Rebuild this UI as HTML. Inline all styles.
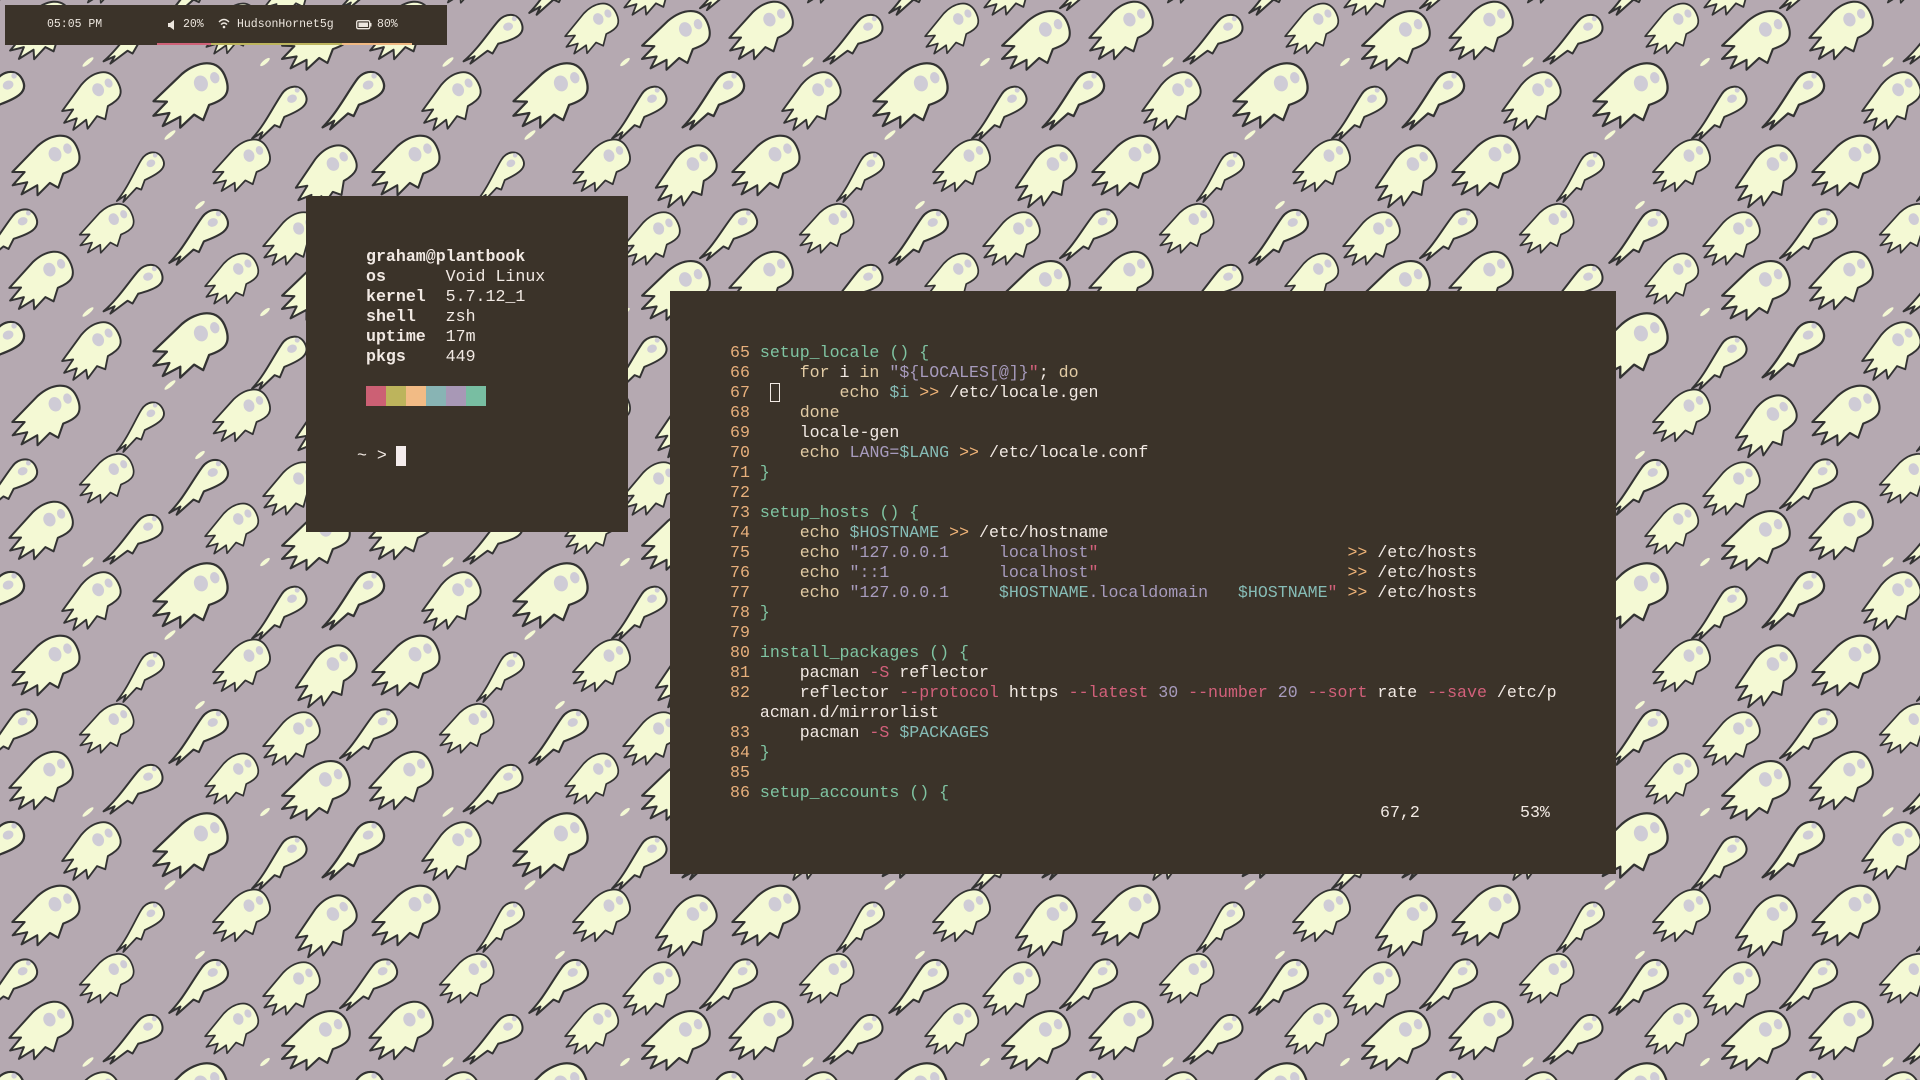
<!DOCTYPE html>
<html><head><meta charset="utf-8"><style>
html,body{margin:0;padding:0;width:1920px;height:1080px;overflow:hidden;background:#b5a9b1;font-family:"Liberation Mono",monospace;}
.bg{position:absolute;left:0;top:0;}
.bar{position:absolute;left:5px;top:5px;width:442px;height:40px;background:#3b3329;color:#ece6de;font-size:11.5px;}
.bar span{position:absolute;top:12px;line-height:16px;white-space:pre;}
.ul{position:absolute;top:38px;height:2px;}
.term{position:absolute;background:#3b3329;}
.ln{position:absolute;white-space:pre;font-size:16.6px;line-height:20px;color:#f2eae4;}
.b{font-weight:bold}
.g{color:#7fc4a2}.n{color:#e8b07c}.k{color:#e2cba4}.s{color:#a79bbd}.v{color:#86bcb6}.o{color:#f0b478}.r{color:#d2607a}.w{color:#f2eae4}
</style></head><body>
<svg class="bg" width="1920" height="1080">
<defs>
<g id="gh">
<path d="M30,-5 C30,-26 10,-27 -5,-21 L-36,-6 L-25,-2 L-40,6 L-26,8 L-35,17 L-18,14 L-21,23 L-6,16 L0,23 L9,12 C24,12 30,8 30,-5 Z" fill="#f4f9d4" stroke="#333" stroke-width="2" stroke-linejoin="round"/>
<ellipse cx="8" cy="-8" rx="6" ry="7" fill="#cfccd6"/>
<ellipse cx="21" cy="-9" rx="4" ry="5" fill="#cfccd6"/>
</g>
<g id="gh2">
<path d="M24,-4 C24,-18 10,-20 2,-14 C-10,-6 -25,8 -42,16 L-30,14 L-36,20 L-16,12 L-12,16 L-4,8 C14,8 24,6 24,-4 Z" fill="#f4f9d4" stroke="#333" stroke-width="2" stroke-linejoin="round"/>
<ellipse cx="10" cy="-6" rx="5" ry="4" fill="#cfccd6"/>
<circle cx="18" cy="-12" r="2.5" fill="#cfccd6"/>
</g>
<g id="tile">
<use href="#gh" transform="translate(45,30) rotate(-22)"/>
<use href="#gh2" transform="translate(140,35) rotate(-15)"/>
<use href="#gh" transform="translate(235,28) rotate(-25) scale(0.85)"/>
<use href="#gh" transform="translate(320,40) rotate(-18) scale(1.05)"/>
<use href="#gh2" transform="translate(0,95) rotate(-20) scale(1.1)"/>
<use href="#gh2" transform="translate(360,95) rotate(-20) scale(1.1)"/>
<use href="#gh" transform="translate(95,100) rotate(-28) scale(0.95)"/>
<use href="#gh" transform="translate(195,95) rotate(-18) scale(1.15)"/>
<use href="#gh2" transform="translate(285,108) rotate(-22)"/>
<use href="#gh" transform="translate(50,165) rotate(-20) scale(1.05)"/>
<use href="#gh2" transform="translate(145,172) rotate(-25) scale(0.9)"/>
<use href="#gh" transform="translate(245,165) rotate(-22) scale(0.9)"/>
<use href="#gh" transform="translate(330,175) rotate(-30) scale(1.0)"/>
<use href="#gh2" transform="translate(15,230) rotate(-18)"/>
<use href="#gh" transform="translate(110,228) rotate(-22) scale(0.85)"/>
<use href="#gh2" transform="translate(205,232) rotate(-20) scale(1.05)"/>
<use href="#gh" transform="translate(295,238) rotate(-24) scale(0.9)"/>
<ellipse cx="88" cy="62" rx="7" ry="2" fill="#f4f9d4" transform="rotate(-40 88 62)"/>
<ellipse cx="170" cy="135" rx="7" ry="2" fill="#f4f9d4" transform="rotate(-40 170 135)"/>
<ellipse cx="265" cy="62" rx="6" ry="2" fill="#f4f9d4" transform="rotate(-40 265 62)"/>
<ellipse cx="200" cy="205" rx="6" ry="2" fill="#f4f9d4" transform="rotate(-40 200 205)"/>
</g>
<pattern id="p" width="360" height="250" patternUnits="userSpaceOnUse">
<use href="#tile" transform="translate(0,-250)"/>
<use href="#tile" transform="translate(-360,-250)"/>
<use href="#tile" transform="translate(360,-250)"/>
<use href="#tile" transform="translate(-360,0)"/>
<use href="#tile"/>
<use href="#tile" transform="translate(360,0)"/>
<use href="#tile" transform="translate(-360,250)"/>
<use href="#tile" transform="translate(0,250)"/>
<use href="#tile" transform="translate(360,250)"/>
</pattern>
</defs>
<rect width="1920" height="1080" fill="url(#p)"/>
</svg>

<div class="bar">
<span style="left:42px">05:05 PM</span>
<svg style="position:absolute;left:162px;top:15px" width="8" height="10"><path d="M1,3 H3 L7,0 V10 L3,7 H1 Z" fill="#ece6de"/></svg>
<span style="left:178px">20%</span>
<svg style="position:absolute;left:213px;top:13px" width="12" height="11" viewBox="0 0 12 11"><path d="M1,4 Q6,-1 11,4" stroke="#ece6de" stroke-width="1.4" fill="none"/><path d="M3,6.5 Q6,3.5 9,6.5" stroke="#ece6de" stroke-width="1.4" fill="none"/><circle cx="6" cy="9" r="1.3" fill="#ece6de"/></svg>
<span style="left:232px">HudsonHornet5g</span>
<svg style="position:absolute;left:351px;top:15px" width="16" height="10"><rect x="0.7" y="0.7" width="13" height="8" rx="1.5" fill="none" stroke="#ece6de" stroke-width="1.3"/><rect x="2.5" y="2.5" width="9.5" height="4.5" fill="#ece6de"/><rect x="14" y="3" width="1.5" height="3.5" fill="#ece6de"/></svg>
<span style="left:372px">80%</span>
<div class="ul" style="left:152px;width:54px;background:#cf6278"></div>
<div class="ul" style="left:206px;width:131px;background:#bdb55e"></div>
<div class="ul" style="left:337px;width:70px;background:#f0b983"></div>
</div>

<div class="term" style="left:306px;top:196px;width:322px;height:336px;">
<div class="ln b w" style="left:60px;top:51px">graham@plantbook</div>
<div class="ln" style="left:60px;top:71px"><span class="b">os</span>      Void Linux</div>
<div class="ln" style="left:60px;top:91px"><span class="b">kernel</span>  5.7.12_1</div>
<div class="ln" style="left:60px;top:111px"><span class="b">shell</span>   zsh</div>
<div class="ln" style="left:60px;top:131px"><span class="b">uptime</span>  17m</div>
<div class="ln" style="left:60px;top:151px"><span class="b">pkgs</span>    449</div>
<div style="position:absolute;left:60px;top:190px;width:20px;height:20px;background:#cc6074"></div>
<div style="position:absolute;left:80px;top:190px;width:20px;height:20px;background:#bdb45c"></div>
<div style="position:absolute;left:100px;top:190px;width:20px;height:20px;background:#f2bb85"></div>
<div style="position:absolute;left:120px;top:190px;width:20px;height:20px;background:#88b4b4"></div>
<div style="position:absolute;left:140px;top:190px;width:20px;height:20px;background:#a898b6"></div>
<div style="position:absolute;left:160px;top:190px;width:20px;height:20px;background:#78bea2"></div>
<div class="ln" style="left:51px;top:250px">~ &gt;</div>
<div style="position:absolute;left:90px;top:250px;width:10px;height:20px;background:#f4ecec"></div>
</div>

<div class="term" style="left:670px;top:291px;width:946px;height:583px;">
<div style="position:absolute;left:60px;top:52px;">
<div class="ln" style="top:0"><span class="n">65 </span><span class="g">setup_locale () {</span></div>
<div class="ln" style="top:20px"><span class="n">66 </span>    <span class="k">for</span> i <span class="k">in</span> <span class="s">"${LOCALES[@]}</span><span class="r">"</span>; <span class="k">do</span></div>
<div class="ln" style="top:40px"><span class="n">67 </span>        <span class="k">echo</span> <span class="v">$i</span> <span class="o">&gt;&gt;</span> /etc/locale.gen</div>
<div style="position:absolute;left:40px;top:40px;width:8px;height:17px;border:1.5px solid #f2eae4"></div>
<div class="ln" style="top:60px"><span class="n">68 </span>    <span class="k">done</span></div>
<div class="ln" style="top:80px"><span class="n">69 </span>    locale-gen</div>
<div class="ln" style="top:100px"><span class="n">70 </span>    <span class="k">echo</span> <span class="s">LANG=</span><span class="v">$LANG</span> <span class="o">&gt;&gt;</span> /etc/locale.conf</div>
<div class="ln" style="top:120px"><span class="n">71 </span><span class="g">}</span></div>
<div class="ln" style="top:140px"><span class="n">72 </span></div>
<div class="ln" style="top:160px"><span class="n">73 </span><span class="g">setup_hosts () {</span></div>
<div class="ln" style="top:180px"><span class="n">74 </span>    <span class="k">echo</span> <span class="v">$HOSTNAME</span> <span class="o">&gt;&gt;</span> /etc/hostname</div>
<div class="ln" style="top:200px"><span class="n">75 </span>    <span class="k">echo</span> <span class="s">"127.0.0.1     localhost</span><span class="r">"</span>                         <span class="o">&gt;&gt;</span> /etc/hosts</div>
<div class="ln" style="top:220px"><span class="n">76 </span>    <span class="k">echo</span> <span class="s">"::1           localhost</span><span class="r">"</span>                         <span class="o">&gt;&gt;</span> /etc/hosts</div>
<div class="ln" style="top:240px"><span class="n">77 </span>    <span class="k">echo</span> <span class="s">"127.0.0.1     </span><span class="v">$HOSTNAME</span><span class="s">.localdomain   </span><span class="v">$HOSTNAME</span><span class="r">"</span> <span class="o">&gt;&gt;</span> /etc/hosts</div>
<div class="ln" style="top:260px"><span class="n">78 </span><span class="g">}</span></div>
<div class="ln" style="top:280px"><span class="n">79 </span></div>
<div class="ln" style="top:300px"><span class="n">80 </span><span class="g">install_packages () {</span></div>
<div class="ln" style="top:320px"><span class="n">81 </span>    pacman <span class="r">-S</span> reflector</div>
<div class="ln" style="top:340px"><span class="n">82 </span>    reflector <span class="r">--protocol</span> https <span class="r">--latest</span> <span class="s">30</span> <span class="r">--number</span> <span class="s">20</span> <span class="r">--sort</span> rate <span class="r">--save</span> /etc/p</div>
<div class="ln" style="top:360px">   acman.d/mirrorlist</div>
<div class="ln" style="top:380px"><span class="n">83 </span>    pacman <span class="r">-S</span> <span class="v">$PACKAGES</span></div>
<div class="ln" style="top:400px"><span class="n">84 </span><span class="g">}</span></div>
<div class="ln" style="top:420px"><span class="n">85 </span></div>
<div class="ln" style="top:440px"><span class="n">86 </span><span class="g">setup_accounts () {</span></div>
<div class="ln" style="top:460px;left:650px">67,2</div>
<div class="ln" style="top:460px;left:790px">53%</div>
</div>
</div>
</body></html>
